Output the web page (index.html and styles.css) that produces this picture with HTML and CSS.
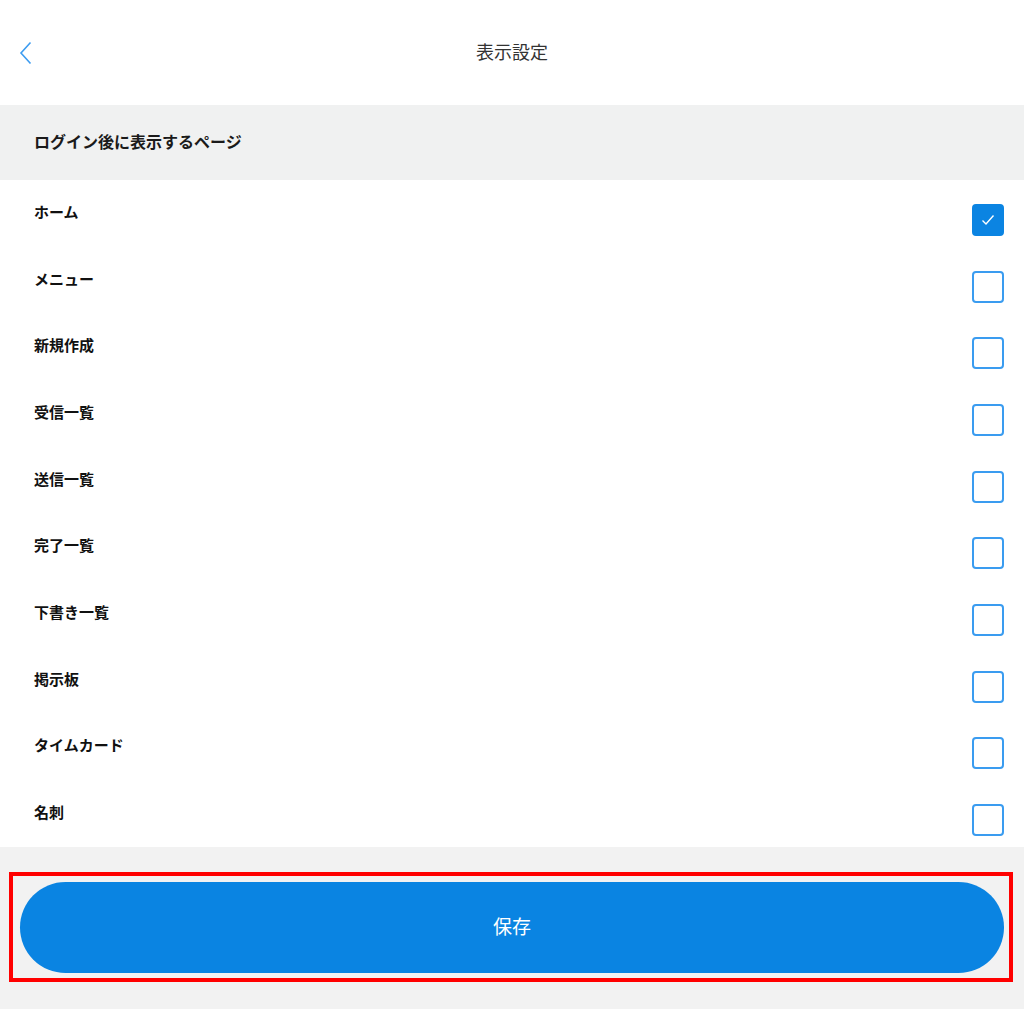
FILE: index.html
```html
<!DOCTYPE html>
<html lang="ja">
<head>
<meta charset="utf-8">
<title>表示設定</title>
<link rel="stylesheet" href="styles.css">
</head>
<body>
<header class="topbar">
  <button class="back" aria-label="戻る">
    <svg width="14" height="24" viewBox="0 0 14 24"><polyline points="11.5,1.5 2,12 11.5,22.5" fill="none" stroke="#3d9cf0" stroke-width="1.6"/></svg>
  </button>
  <h1 class="title">表示設定</h1>
</header>
<div class="section-head">ログイン後に表示するページ</div>
<ul class="list">
  <li class="row"><span class="label">ホーム</span><span class="box checked"><svg width="14" height="12" viewBox="0 0 14 12"><polyline points="1.5,6.5 5,10 12.5,1.5" fill="none" stroke="#fff" stroke-width="1.4"/></svg></span></li>
  <li class="row"><span class="label">メニュー</span><span class="box"></span></li>
  <li class="row"><span class="label">新規作成</span><span class="box"></span></li>
  <li class="row"><span class="label">受信一覧</span><span class="box"></span></li>
  <li class="row"><span class="label">送信一覧</span><span class="box"></span></li>
  <li class="row"><span class="label">完了一覧</span><span class="box"></span></li>
  <li class="row"><span class="label">下書き一覧</span><span class="box"></span></li>
  <li class="row"><span class="label">掲示板</span><span class="box"></span></li>
  <li class="row"><span class="label">タイムカード</span><span class="box"></span></li>
  <li class="row"><span class="label">名刺</span><span class="box"></span></li>
</ul>
<footer class="footer">
  <div class="highlight">
    <button class="save">保存</button>
  </div>
</footer>
</body>
</html>
```
FILE: styles.css
```css
* { box-sizing: border-box; }
html, body { margin: 0; padding: 0; }
body {
  width: 1024px;
  height: 1009px;
  overflow: hidden;
  background: #f2f2f2;
  font-family: "Noto Sans CJK JP", "Noto Sans", sans-serif;
  color: #222;
}
.topbar {
  height: 105px;
  background: #fff;
  display: flex;
  align-items: center;
  justify-content: center;
  position: relative;
}
.back {
  position: absolute;
  left: 19px;
  top: 41px;
  padding: 0;
  border: 0;
  background: none;
  display: flex;
}
.title {
  margin: 0;
  font-size: 18px;
  font-weight: 400;
  color: #333;
  line-height: 24px;
  margin-top: -3px;
}
.section-head {
  height: 75px;
  background: #f0f1f1;
  display: flex;
  align-items: center;
  padding-left: 34px;
  font-size: 16px;
  font-weight: 700;
  color: #1a1a1a;
  padding-bottom: 3px;
}
.list {
  list-style: none;
  margin: 0;
  padding: 0;
  background: #fff;
}
.row {
  height: 66.67px;
  display: flex;
  justify-content: space-between;
  align-items: flex-start;
  padding: 24px 20px 0 34px;
}
.label {
  font-size: 15px;
  font-weight: 700;
  line-height: 20px;
  margin-top: -2px;
  color: #111;
}
.box {
  width: 32px;
  height: 32px;
  border: 2px solid #3a9cf0;
  border-radius: 4px;
  background: #fff;
  display: flex;
  align-items: center;
  justify-content: center;
}
.box.checked {
  background: #0b84e2;
  border-color: #0b84e2;
}
.footer {
  padding-top: 25px;
}
.highlight {
  margin-left: 9px;
  width: 1004px;
  border: 4px solid #ff0000;
  padding: 6px 5px 5px 7px;
}
.save {
  display: block;
  width: 100%;
  height: 91px;
  border: 0;
  border-radius: 46px;
  background: #0a84e2;
  color: #fff;
  font-family: "Noto Sans CJK JP", "Noto Sans", sans-serif;
  font-size: 19px;
  font-weight: 400;
  padding: 0 0 4px;
}
```
